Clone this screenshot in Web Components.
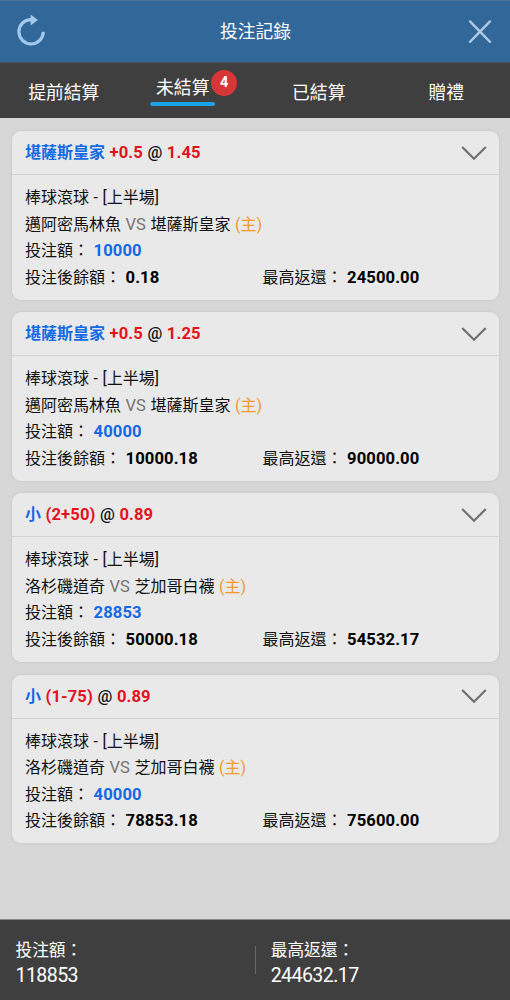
<!DOCTYPE html>
<html lang="zh-Hant">
<head>
<meta charset="utf-8">
<title>投注記錄</title>
<style>
  body {
    margin: 0;
    font-family: Roboto, "Noto Sans CJK TC", sans-serif;
    background: #d7d7d7;
  }
</style>
</head>
<body>
<bet-history></bet-history>

<script>
class HistoryHeader extends HTMLElement {

  constructor() {
    super();

    this.attachShadow({ mode: 'open' }).innerHTML = `
      <style>
        :host {
          display: grid;
          grid-template-columns: 62px 1fr 62px;
          align-items: center;
          justify-items: center;
          flex: none;
          height: 62px;
          box-sizing: border-box;
          border-top: 1px solid #4d7597;
          background: #326799;
          color: #fff;
          font-size: 17.8px;
        }

        svg {
          display: block;
          fill: none;
        }

        .title {
          padding: 0 0 3px 1px;
        }
      </style>
      <svg width="62" height="61" viewBox="0 1 62 61">
        <path d="M33 19.6h-2A12.2 12.2 0 1 0 43.3 31.8" stroke="#a3c8ee" stroke-width="3.2"/>
        <path d="M30.6 14.6l7.4 5.4-7.4 5.4z" fill="#a3c8ee"/>
      </svg>
      <div class="title"><slot></slot></div>
      <svg width="62" height="61" viewBox="448 1 62 61">
        <path d="M470 21.4l20 20.4M490 21.4l-20 20.4" stroke="#adc8e6" stroke-width="2.4" stroke-linecap="round"/>
      </svg>
    `;
  }
}
customElements.define('history-header', HistoryHeader)

class HistoryTab extends HTMLElement {

  connectedCallback() {
    const badge = this.getAttribute('badge');

    this.attachShadow({ mode: 'open' }).innerHTML = `
      <style>
        :host {
          display: flex;
          justify-content: center;
          align-items: center;
          color: #fff;
          font-size: 17.8px;
          line-height: 26px;
        }

        .label {
          position: relative;
          margin-top: 4px;
        }

        /* Leaves room for the badge on the right */
        :host([active]) .label {
          margin: -1px 17px 0 0;
        }

        .line {
          height: 4px;
          margin: 1px -6px 0;
          border-radius: 2px;
          background: #1ba1e6;
        }

        .badge {
          position: absolute;
          left: 55px;
          top: -5px;
          width: 26px;
          height: 26px;
          border-radius: 50%;
          background: #d63637;
          font-size: 14.5px;
          font-weight: 700;
          line-height: 25px;
          text-align: center;
        }
      </style>
      <div class="label">
        <slot></slot>
        ${this.hasAttribute('active') ? '<div class="line"></div>' : ''}
        ${badge ? `<span class="badge">${badge}</span>` : ''}
      </div>
    `;
  }
}
customElements.define('history-tab', HistoryTab)

class HistoryTabs extends HTMLElement {

  constructor() {
    super();

    this.attachShadow({ mode: 'open' }).innerHTML = `
      <style>
        :host {
          display: grid;
          grid-template-columns: repeat(4, 1fr);
          flex: none;
          height: 56px;
          box-sizing: border-box;
          border-top: 1px solid #49525b;
          background: #3f3f3f;
        }
      </style>
      <slot></slot>
    `;
  }
}
customElements.define('history-tabs', HistoryTabs)

class BetCard extends HTMLElement {

  connectedCallback() {
    const get = name => this.getAttribute(name);

    this.attachShadow({ mode: 'open' }).innerHTML = `
      <style>
        :host {
          display: block;
          height: 168.6px;
          border-radius: 9px;
          background: #e9e9e9;
          box-shadow: 0 0 2px 1px #cccccc;
          color: #111;
          font-size: 16px;
          line-height: 26.5px;
          word-spacing: .6px;
          white-space: nowrap;
        }

        header {
          display: flex;
          align-items: center;
          justify-content: space-between;
          height: 43px;
          padding: 0 11.5px 0 13px;
          border-bottom: 1px solid #d3d3d3;
        }

        header div {
          padding-top: 1.5px;
        }

        b {
          color: #000;
          font-size: 16.6px;
          letter-spacing: .1px;
          line-height: 1;
        }

        .pick, .stake {
          color: #1469e4;
        }

        .pick {
          font-size: 16px;
          letter-spacing: 0;
        }

        .odds {
          color: #e3131b;
        }

        .at {
          font-size: 16.5px;
          font-weight: 500;
        }

        .body {
          padding: 10px 13px 0;
        }

        .vs {
          color: #747474;
          font-size: 16.5px;
          line-height: 1;
        }

        .home {
          color: #f09a2c;
        }

        .row {
          display: grid;
          grid-template-columns: 237.5px 1fr;
        }
      </style>
      <header>
        <div><b class="pick">${get('pick')}</b> <b class="odds">${get('line')}</b> <span class="at">@</span> <b class="odds">${get('odds')}</b></div>
        <svg width="26" height="16" viewBox="0 0 26 16" fill="none" stroke="#707070" stroke-width="2.2">
          <path d="M1.2 2L13 13.7 24.8 2"/>
        </svg>
      </header>
      <div class="body">
        <div>棒球滾球 - [上半場]</div>
        <div>${get('away')} <span class="vs">VS</span> ${get('home')} <span class="home">(主)</span></div>
        <div>投注額： <b class="stake">${get('stake')}</b></div>
        <div class="row">
          <div>投注後餘額： <b>${get('balance')}</b></div>
          <div>最高返還： <b>${get('payout')}</b></div>
        </div>
      </div>
    `;
  }
}
customElements.define('bet-card', BetCard)

class BetTotal extends HTMLElement {

  constructor() {
    super();

    this.attachShadow({ mode: 'open' }).innerHTML = `
      <style>
        :host {
          display: block;
          padding: 18px 0 0 15.5px;
          color: #fff;
          font-size: 19.6px;
          letter-spacing: -.6px;
          line-height: 25px;
        }

        .label {
          font-size: 16.7px;
          letter-spacing: 0;
        }
      </style>
      <div class="label"><slot name="label"></slot></div>
      <div><slot></slot></div>
    `;
  }
}
customElements.define('bet-total', BetTotal)

class HistoryFooter extends HTMLElement {

  constructor() {
    super();

    this.attachShadow({ mode: 'open' }).innerHTML = `
      <style>
        :host {
          display: grid;
          grid-template-columns: 255px 1px 254px;
          flex: none;
          height: 81px;
          box-sizing: border-box;
          border-top: 1px solid #8b8b8b;
          background: #3f3f3f;
        }

        .divider {
          align-self: center;
          height: 28px;
          background: #666;
        }

        ::slotted([slot="payout"]) {
          margin-left: -.8px;
        }
      </style>
      <slot name="stake"></slot>
      <div class="divider"></div>
      <slot name="payout"></slot>
    `;
  }
}
customElements.define('history-footer', HistoryFooter)

class BetHistory extends HTMLElement {

  constructor() {
    super();

    this.bets = [
      { pick: '堪薩斯皇家', line: '+0.5', odds: '1.45', away: '邁阿密馬林魚', home: '堪薩斯皇家', stake: '10000', balance: '0.18', payout: '24500.00' },
      { pick: '堪薩斯皇家', line: '+0.5', odds: '1.25', away: '邁阿密馬林魚', home: '堪薩斯皇家', stake: '40000', balance: '10000.18', payout: '90000.00' },
      { pick: '小', line: '(2+50)', odds: '0.89', away: '洛杉磯道奇', home: '芝加哥白襪', stake: '28853', balance: '50000.18', payout: '54532.17' },
      { pick: '小', line: '(1-75)', odds: '0.89', away: '洛杉磯道奇', home: '芝加哥白襪', stake: '40000', balance: '78853.18', payout: '75600.00' },
    ];
  }

  connectedCallback() {
    const renderBet = bet => {
      const attributes = Object.entries(bet).map(([name, value]) => `${name}="${value}"`);
      return `<bet-card ${attributes.join(' ')}></bet-card>`;
    };

    this.attachShadow({ mode: 'open' }).innerHTML = `
      <style>
        :host {
          display: flex;
          flex-direction: column;
          height: 100vh;
          overflow: hidden;
        }

        main {
          display: flex;
          flex-direction: column;
          gap: 12.6px;
          flex: 1;
          min-height: 0;
          padding: 13px 11.5px 0 12px;
        }
      </style>
      <history-header>投注記錄</history-header>
      <history-tabs>
        <history-tab>提前結算</history-tab>
        <history-tab active badge="4">未結算</history-tab>
        <history-tab>已結算</history-tab>
        <history-tab>贈禮</history-tab>
      </history-tabs>
      <main>${this.bets.map(renderBet).join('')}</main>
      <history-footer>
        <bet-total slot="stake"><span slot="label">投注額：</span>118853</bet-total>
        <bet-total slot="payout"><span slot="label">最高返還：</span>244632.17</bet-total>
      </history-footer>
    `;
  }
}
customElements.define('bet-history', BetHistory)
</script>
</body>
</html>
